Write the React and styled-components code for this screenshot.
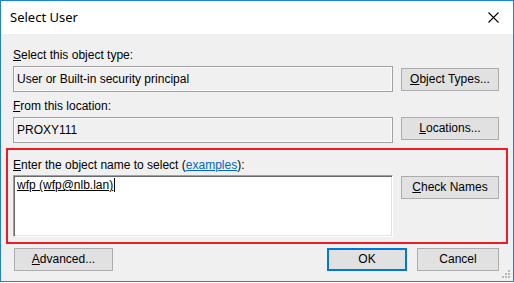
import React from 'react';
import styled, { createGlobalStyle } from 'styled-components';

const GlobalStyle = createGlobalStyle`
  html, body {
    margin: 0;
    padding: 0;
    background: #ffffff;
  }
  body {
    font-family: "Liberation Sans", Arial, sans-serif;
    font-size: 12px;
    color: #000;
  }
`;

const Window = styled.div`
  width: 514px;
  height: 282px;
  box-sizing: border-box;
  border: 1px solid #1883d7;
  display: flex;
  flex-direction: column;
  background: #f0f0f0;
  position: relative;
`;

const TitleBar = styled.div`
  height: 33px;
  background: #fff;
  display: flex;
  align-items: center;
  justify-content: space-between;
  padding: 0 0 0 9px;
`;

const Title = styled.div`
  font-family: "Noto Sans", "Open Sans", sans-serif;
  font-size: 13px;
  color: #000;
  padding-bottom: 1px;
`;

const CloseBox = styled.div`
  width: 46px;
  height: 33px;
  display: flex;
  align-items: center;
  justify-content: center;
  margin-right: -3px;
`;

const Body = styled.div`
  flex: 1;
  padding: 14px 5px 0 5px;
  display: flex;
  flex-direction: column;
`;

const Section = styled.div`
  padding: 0 9px 0 7px;
  margin-bottom: ${p => p.$gap || 0}px;
`;

const Highlight = styled.div`
  border: 2px solid #ee1c25;
  padding: 8px 7px 5px 5px;
  margin-top: 5px;
`;

const Label = styled.div`
  line-height: 14px;
  height: 14px;
  white-space: nowrap;
`;

const Key = styled.span`
  text-decoration: underline;
`;

const Link = styled.span`
  color: #0066cc;
  text-decoration: underline;
`;

const Row = styled.div`
  display: flex;
  align-items: flex-start;
  gap: 8px;
  margin-top: ${p => p.$top || 4}px;
`;

const Field = styled.div`
  width: 380px;
  height: 26px;
  box-sizing: border-box;
  border: 1px solid #a0a0a0;
  box-shadow: inset 0 0 0 1px #fbfbfb;
  background: #f0f0f0;
  display: flex;
  align-items: center;
  padding: 0 0 1px 3px;
  white-space: nowrap;
`;

const MultiField = styled.div`
  width: 380px;
  height: 62px;
  box-sizing: border-box;
  border-top: 1px solid #a0a0a0;
  border-left: 1px solid #a0a0a0;
  border-right: 1px solid #fff;
  border-bottom: 1px solid #fff;
  box-shadow: inset 1px 1px 0 #696969, inset -1px -1px 0 #e3e3e3;
  background: #fff;
  padding: 2px 0 0 3px;
  line-height: 14px;
`;

const Resolved = styled.span`
  text-decoration: underline;
`;

const Caret = styled.span`
  display: inline-block;
  width: 1px;
  height: 14px;
  background: #000;
  vertical-align: top;
  margin-left: 1px;
`;

const Button = styled.div`
  width: ${p => p.$w || 98}px;
  height: 23px;
  box-sizing: border-box;
  margin-top: ${p => p.$top || 0}px;
  background: #e1e1e1;
  border: ${p => (p.$primary ? '2px solid #0078d7' : '1px solid #adadad')};
  display: flex;
  align-items: center;
  justify-content: center;
  white-space: nowrap;
  padding-bottom: 1px;
  flex-shrink: 0;
`;

const Footer = styled.div`
  display: flex;
  align-items: center;
  padding: 0 9px 0 8px;
  margin-top: 4px;
`;

const Spacer = styled.div`
  flex: 1;
`;

const FooterButtons = styled.div`
  display: flex;
  gap: 10px;
`;

const Grip = styled.svg`
  position: absolute;
  right: 2px;
  bottom: 2px;
`;

const CloseIcon = () => (
  <svg width="11" height="11" viewBox="0 0 11 11">
    <path d="M0.5 0.5 L10.5 10.5 M10.5 0.5 L0.5 10.5" stroke="#000" strokeWidth="1.1" />
  </svg>
);

const App = () => (
  <>
    <GlobalStyle />
    <Window>
      <TitleBar>
        <Title>Select User</Title>
        <CloseBox>
          <CloseIcon />
        </CloseBox>
      </TitleBar>
      <Body>
        <Section $gap={7}>
          <Label>
            <Key>S</Key>elect this object type:
          </Label>
          <Row>
            <Field>User or Built-in security principal</Field>
            <Button $top={2}>
              <Key>O</Key>bject Types...
            </Button>
          </Row>
        </Section>
        <Section>
          <Label>
            <Key>F</Key>rom this location:
          </Label>
          <Row>
            <Field>PROXY111</Field>
            <Button>
              <Key>L</Key>ocations...
            </Button>
          </Row>
        </Section>
        <Highlight>
          <Label>
            <Key>E</Key>nter the object name to select (<Link>examples</Link>):
          </Label>
          <Row $top={3}>
            <MultiField>
              <Resolved>wfp (wfp@nlb.lan)</Resolved>
              <Caret />
            </MultiField>
            <Button $top={1}>
              <Key>C</Key>heck Names
            </Button>
          </Row>
        </Highlight>
        <Footer>
          <Button $w={99}>
            <Key>A</Key>dvanced...
          </Button>
          <Spacer />
          <FooterButtons>
            <Button $w={80} $primary>OK</Button>
            <Button $w={82}>Cancel</Button>
          </FooterButtons>
        </Footer>
      </Body>
      <Grip width="10" height="10" viewBox="0 0 10 10">
        <g fill="#b8b8b8">
          <rect x="7" y="1" width="2" height="2" />
          <rect x="4" y="4" width="2" height="2" />
          <rect x="7" y="4" width="2" height="2" />
          <rect x="1" y="7" width="2" height="2" />
          <rect x="4" y="7" width="2" height="2" />
          <rect x="7" y="7" width="2" height="2" />
        </g>
      </Grip>
    </Window>
  </>
);

export default App;
